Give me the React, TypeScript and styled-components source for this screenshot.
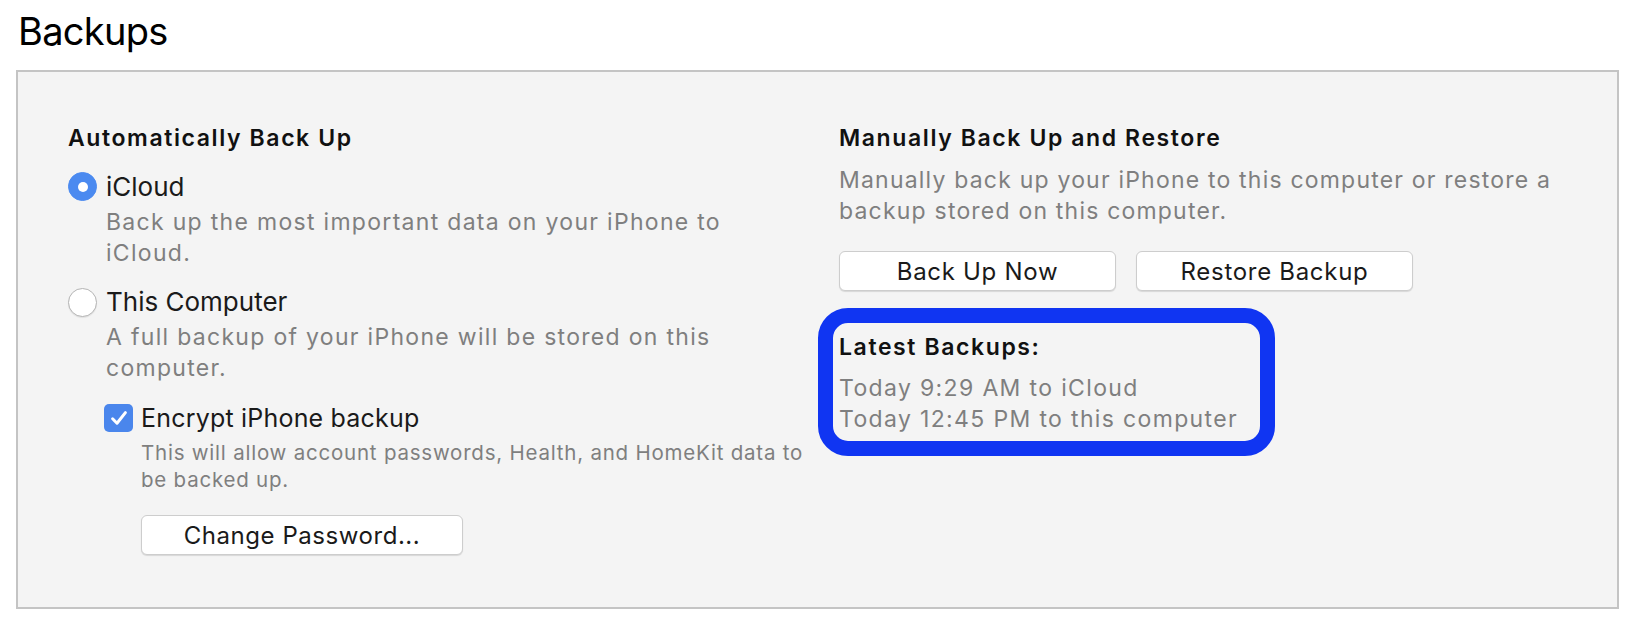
import React from "react";
import styled, { createGlobalStyle } from "styled-components";

const GlobalStyle = createGlobalStyle`
  html, body {
    margin: 0;
    padding: 0;
    background: #ffffff;
  }
  body {
    font-family: Inter, "Noto Sans", "Liberation Sans", sans-serif;
    color: #1d1d1d;
  }
`;

type IOption = {
  label: string;
  description: string;
  selected: boolean;
};

const options: IOption[] = [
  {
    label: "iCloud",
    description: "Back up the most important data on your iPhone to iCloud.",
    selected: true,
  },
  {
    label: "This Computer",
    description: "A full backup of your iPhone will be stored on this computer.",
    selected: false,
  },
];

const latestBackups = ["Today 9:29 AM to iCloud", "Today 12:45 PM to this computer"];

const CheckMark = () => (
  <svg width="22" height="22" viewBox="0 0 22 22">
    <path
      d="M4.6 11.8 L9 16.2 L17.4 5.6"
      fill="none"
      stroke="#ffffff"
      strokeWidth="3"
      strokeLinecap="round"
      strokeLinejoin="round"
    />
  </svg>
);

const RadioOption = ({ label, description, selected }: IOption) => (
  <StyledOption>
    <StyledOptionRow>
      <StyledRadio $selected={selected} />
      <StyledOptionLabel>{label}</StyledOptionLabel>
    </StyledOptionRow>
    <StyledDescription>{description}</StyledDescription>
  </StyledOption>
);

export default function App() {
  return (
    <>
      <GlobalStyle />
      <StyledPage>
        <StyledPageTitle>Backups</StyledPageTitle>
        <StyledPanel>
          <StyledColumn>
            <StyledSectionTitle>Automatically Back Up</StyledSectionTitle>
            <StyledOptionList>
              {options.map((option) => (
                <RadioOption
                  key={option.label}
                  label={option.label}
                  description={option.description}
                  selected={option.selected}
                />
              ))}
            </StyledOptionList>
            <StyledEncrypt>
              <StyledCheckRow>
                <StyledCheckbox>
                  <CheckMark />
                </StyledCheckbox>
                <StyledCheckLabel>Encrypt iPhone backup</StyledCheckLabel>
              </StyledCheckRow>
              <StyledSmallDescription>
                This will allow account passwords, Health, and HomeKit data to be backed up.
              </StyledSmallDescription>
              <StyledButton $width={322}>Change Password...</StyledButton>
            </StyledEncrypt>
          </StyledColumn>

          <StyledColumn>
            <StyledSectionTitle>Manually Back Up and Restore</StyledSectionTitle>
            <StyledManualDescription>
              Manually back up your iPhone to this computer or restore a backup stored on this
              computer.
            </StyledManualDescription>
            <StyledButtonRow>
              <StyledButton $width={277}>Back Up Now</StyledButton>
              <StyledButton $width={277}>Restore Backup</StyledButton>
            </StyledButtonRow>
            <StyledHighlight>
              <StyledLatestTitle>Latest Backups:</StyledLatestTitle>
              <StyledLatestList>
                {latestBackups.map((line) => (
                  <StyledLatestLine key={line}>{line}</StyledLatestLine>
                ))}
              </StyledLatestList>
            </StyledHighlight>
          </StyledColumn>
        </StyledPanel>
      </StyledPage>
    </>
  );
}

const StyledPage = styled.div`
  width: 1636px;
  height: 630px;
  padding: 8px 0 0 16px;
  box-sizing: border-box;
`;

const StyledPageTitle = styled.h1`
  margin: 0 0 0 2px;
  font-size: 38px;
  font-weight: 400;
  line-height: 46px;
  color: #000000;
  letter-spacing: -0.7px;
`;

const StyledPanel = styled.div`
  margin-top: 16px;
  width: 1603px;
  height: 539px;
  box-sizing: border-box;
  border: 2px solid #c4c4c4;
  background: #f4f4f4;
  padding: 52px 0 0 50px;
  display: grid;
  grid-template-columns: 771px 1fr;
`;

const StyledColumn = styled.div`
  display: flex;
  flex-direction: column;
  align-items: flex-start;
`;

const StyledSectionTitle = styled.h2`
  margin: 0;
  font-size: 23px;
  font-weight: 600;
  line-height: 28px;
  letter-spacing: 1.6px;
  color: #111111;
`;

const StyledOptionList = styled.div`
  margin-top: 20px;
  display: flex;
  flex-direction: column;
  gap: 19px;
`;

const StyledOption = styled.div`
  display: flex;
  flex-direction: column;
`;

const StyledOptionRow = styled.div`
  display: flex;
  align-items: center;
  gap: 9px;
`;

const StyledRadio = styled.span<{ $selected: boolean }>`
  width: 29px;
  height: 29px;
  box-sizing: border-box;
  border-radius: 50%;
  flex-shrink: 0;
  background: ${({ $selected }) => ($selected ? "#4b8af0" : "#ffffff")};
  border: 1px solid ${({ $selected }) => ($selected ? "#4b8af0" : "#b4b4b4")};
  box-shadow: ${({ $selected }) => ($selected ? "none" : "0 1px 1px rgba(0, 0, 0, 0.08)")};
  display: flex;
  align-items: center;
  justify-content: center;

  &::after {
    content: "";
    width: 10px;
    height: 10px;
    border-radius: 50%;
    background: #ffffff;
    display: ${({ $selected }) => ($selected ? "block" : "none")};
  }
`;

const StyledOptionLabel = styled.span`
  font-size: 26px;
  line-height: 28px;
  color: #1a1a1a;
`;

const StyledDescription = styled.p`
  margin: 5.5px 0 0 38px;
  max-width: 650px;
  font-size: 23px;
  line-height: 31px;
  letter-spacing: 1.3px;
  color: #7f7f7f;
`;

const StyledEncrypt = styled.div`
  margin: 20px 0 0 36px;
  display: flex;
  flex-direction: column;
  align-items: flex-start;
`;

const StyledCheckRow = styled.div`
  display: flex;
  align-items: center;
  gap: 8px;
`;

const StyledCheckbox = styled.span`
  width: 29px;
  height: 28px;
  border-radius: 5px;
  background: #4a86ec;
  display: flex;
  align-items: center;
  justify-content: center;
`;

const StyledCheckLabel = styled.span`
  font-size: 25px;
  line-height: 28px;
  letter-spacing: 0.2px;
  color: #1a1a1a;
`;

const StyledSmallDescription = styled.p`
  margin: 7px 0 0 37px;
  max-width: 680px;
  font-size: 20.5px;
  line-height: 27px;
  letter-spacing: 0.78px;
  color: #7f7f7f;
`;

const StyledButton = styled.button<{ $width: number }>`
  width: ${({ $width }) => $width}px;
  height: 40px;
  margin: 0;
  padding: 0;
  border: 1px solid #cdcdcd;
  border-radius: 6px;
  background: #ffffff;
  box-shadow: 0 1px 1px rgba(0, 0, 0, 0.12);
  font-family: inherit;
  font-size: 24px;
  letter-spacing: 0.7px;
  color: #1a1a1a;
  cursor: pointer;

  ${StyledEncrypt} & {
    margin: 22px 0 0 37px;
    letter-spacing: 0.55px;
  }
`;

const StyledManualDescription = styled.p`
  margin: 13px 0 0;
  max-width: 750px;
  font-size: 23px;
  line-height: 31px;
  letter-spacing: 1.2px;
  color: #7f7f7f;
`;

const StyledButtonRow = styled.div`
  margin-top: 24px;
  display: flex;
  gap: 20px;
`;

const StyledHighlight = styled.div`
  margin: 17px 0 0 -21px;
  width: 457px;
  box-sizing: border-box;
  border: 15px solid #1035f2;
  border-radius: 30px;
  padding: 10px 6px 6px;
`;

const StyledLatestTitle = styled.div`
  font-size: 23px;
  font-weight: 600;
  line-height: 28px;
  letter-spacing: 1.6px;
  color: #111111;
`;

const StyledLatestList = styled.div`
  margin-top: 12px;
  display: flex;
  flex-direction: column;
`;

const StyledLatestLine = styled.div`
  font-size: 23px;
  line-height: 31px;
  letter-spacing: 1.35px;
  color: #7f7f7f;
  white-space: nowrap;
`;
